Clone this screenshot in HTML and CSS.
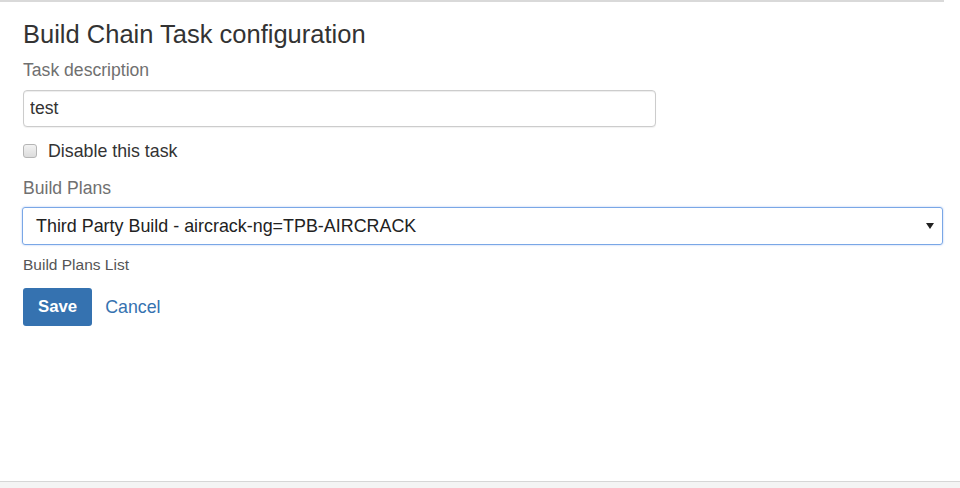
FILE: index.html
```html
<!DOCTYPE html>
<html lang="en">
<head>
    <meta charset="UTF-8">
    <meta name="viewport" content="width=device-width, initial-scale=1.0">
    <title>Build Chain Task configuration</title>
    <link rel="stylesheet" href="styles.css">
</head>
<body>
    <div class="page">
        <div class="top-rule"></div>

        <form class="task-form">
            <h1 class="form-title">Build Chain Task configuration</h1>

            <div class="field">
                <label class="field-label" for="description">Task description</label>
                <input class="text-input" id="description" type="text" value="test">
            </div>

            <label class="check-row">
                <input class="check-box" type="checkbox">
                <span>Disable this task</span>
            </label>

            <div class="field">
                <label class="field-label plans-label" for="plans">Build Plans</label>
                <div class="select-box" id="plans">
                    <span>Third Party Build - aircrack-ng=TPB-AIRCRACK</span>
                    <span class="select-arrow"></span>
                </div>
                <div class="field-hint">Build Plans List</div>
            </div>

            <div class="actions">
                <button class="save-btn" type="button">Save</button>
                <a class="cancel-link" href="#">Cancel</a>
            </div>
        </form>

        <div class="footer"></div>
    </div>
</body>
</html>
```

FILE: styles.css
```css
body {
    margin: 0;
    font-family: "Liberation Sans", Arial, sans-serif;
    color: #333;
    background: #fff;
}

.page {
    height: 488px;
    display: flex;
    flex-direction: column;
}

.top-rule {
    width: 944px;
    height: 2px;
    background: #d9d9d9;
}

.task-form {
    flex: 1;
    padding: 0 17px 0 23px;
}

.form-title {
    margin: 17px 0 0;
    font-size: 25.5px;
    font-weight: normal;
    line-height: 30px;
    color: #333;
}

.field {
    display: flex;
    flex-direction: column;
}

.field-label {
    margin-top: 11px;
    font-size: 17.6px;
    line-height: 20px;
    color: #707070;
}

.plans-label {
    margin-top: 17px;
}

.text-input {
    box-sizing: border-box;
    width: 633px;
    height: 37px;
    margin-top: 10px;
    padding: 0 6px;
    border: 1px solid #ccc;
    border-radius: 4px;
    box-shadow: inset 0 1px 1px rgba(0, 0, 0, 0.075), 0 1px 1px rgba(0, 0, 0, 0.06);
    font-family: inherit;
    font-size: 17.6px;
    color: #333;
}

/* Checkbox */
.check-row {
    display: flex;
    align-items: center;
    gap: 11px;
    margin-top: 14px;
    font-size: 17.8px;
    line-height: 20px;
    color: #333;
}

.check-box {
    appearance: none;
    width: 14px;
    height: 14px;
    margin: 0;
    border: 1px solid #b5b5b5;
    border-radius: 3px;
    background: linear-gradient(#f2f2f2, #dcdcdc);
}

/* Select */
.select-box {
    box-sizing: border-box;
    display: flex;
    align-items: center;
    justify-content: space-between;
    height: 38px;
    margin-top: 9px;
    margin-left: -1px;
    padding: 0 8px 0 13px;
    border: 1px solid #7aa7e6;
    border-radius: 3px;
    box-shadow: 0 0 2px rgba(102, 150, 233, 0.6);
    font-size: 17.9px;
    color: #222;
}

.select-arrow {
    width: 0;
    height: 0;
    border-left: 4px solid transparent;
    border-right: 4px solid transparent;
    border-top: 6px solid #222;
}

.field-hint {
    margin-top: 11px;
    font-size: 15.5px;
    line-height: 18px;
    color: #555;
}

/* Buttons */
.actions {
    display: flex;
    align-items: center;
    gap: 13px;
    margin-top: 14px;
}

.save-btn {
    height: 38px;
    padding: 0 15px;
    border: none;
    border-radius: 3px;
    background: #3572b0;
    color: #fff;
    font-family: inherit;
    font-size: 16.8px;
    font-weight: bold;
}

.cancel-link {
    font-size: 17.8px;
    color: #3572b0;
    text-decoration: none;
}

.footer {
    height: 6px;
    border-top: 1px solid #d6d6d6;
    background: #f4f4f4;
}
```
